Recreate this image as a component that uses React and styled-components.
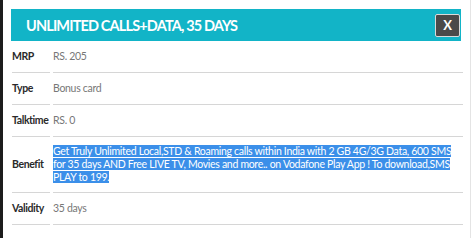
import React from "react";
import styled, { createGlobalStyle } from "styled-components";

const Global = createGlobalStyle`
  html, body {
    margin: 0;
    padding: 0;
    background: #ffffff;
  }
  body {
    font-family: Lato, "Open Sans", sans-serif;
  }
`;

const Modal = styled.div`
  width: 471px;
  height: 238px;
  box-sizing: border-box;
  border-left: 3px solid #1c1c1c;
  border-right: 1px solid #e4e4e4;
  padding: 9px 9px 0 8px;
  background: #fff;
`;

const Header = styled.div`
  height: 32px;
  background: #12b4c7;
  display: flex;
  align-items: center;
  justify-content: space-between;
  padding: 0 1px 0 15px;
`;

const Title = styled.h2`
  margin: 0;
  color: #fff;
  font-family: Lato, sans-serif;
  font-weight: 700;
  font-size: 14.5px;
  letter-spacing: -0.85px;
`;

const Close = styled.button`
  width: 25px;
  height: 23px;
  padding: 0;
  border: 1px solid #d9d9d9;
  border-radius: 2px;
  background: #4a4949;
  color: #fff;
  font-family: Lato, sans-serif;
  font-weight: 700;
  font-size: 13px;
  line-height: 1;
  display: flex;
  align-items: center;
  justify-content: center;
`;

const Table = styled.div`
  display: grid;
  grid-template-columns: 38px 1fr;
  column-gap: 3px;
  padding-left: 1px;
`;

const Cell = styled.div`
  min-height: 32px;
  box-sizing: border-box;
  border-bottom: 1px solid #d6d6d6;
  display: flex;
  align-items: center;
  padding: 8px 0;
  font-size: 10.5px;
  line-height: 13px;
  letter-spacing: ${(p) => (p.$label ? "-0.4px" : "-0.3px")};
  color: ${(p) => (p.$label ? "#2a2a2a" : "#777")};
  font-weight: ${(p) => (p.$label ? 700 : 400)};
  margin-right: ${(p) => (p.$label ? "0" : "-2px")};
  white-space: ${(p) => (p.$label ? "nowrap" : "normal")};
`;

const Highlight = styled.span`
  background: #3b8fe9;
  color: #fff;
`;

const rows = [
  ["MRP", "RS. 205"],
  ["Type", "Bonus card"],
  ["Talktime", "RS. 0"],
  [
    "Benefit",
    "Get Truly Unlimited Local,STD & Roaming calls within India with 2 GB 4G/3G Data, 600 SMS for 35 days AND Free LIVE TV, Movies and more.. on Vodafone Play App ! To download,SMS PLAY to 199.",
    true,
  ],
  ["Validity", "35 days"],
];

const App = () => {
  return (
    <>
      <Global />
      <Modal>
        <Header>
          <Title>UNLIMITED CALLS+DATA, 35 DAYS</Title>
          <Close>X</Close>
        </Header>
        <Table>
          {rows.map(([label, value, hl]) => (
            <React.Fragment key={label}>
              <Cell $label>{label}</Cell>
              <Cell>
                {hl ? <span><Highlight>{value}</Highlight></span> : value}
              </Cell>
            </React.Fragment>
          ))}
        </Table>
      </Modal>
    </>
  );
};

export default App;
